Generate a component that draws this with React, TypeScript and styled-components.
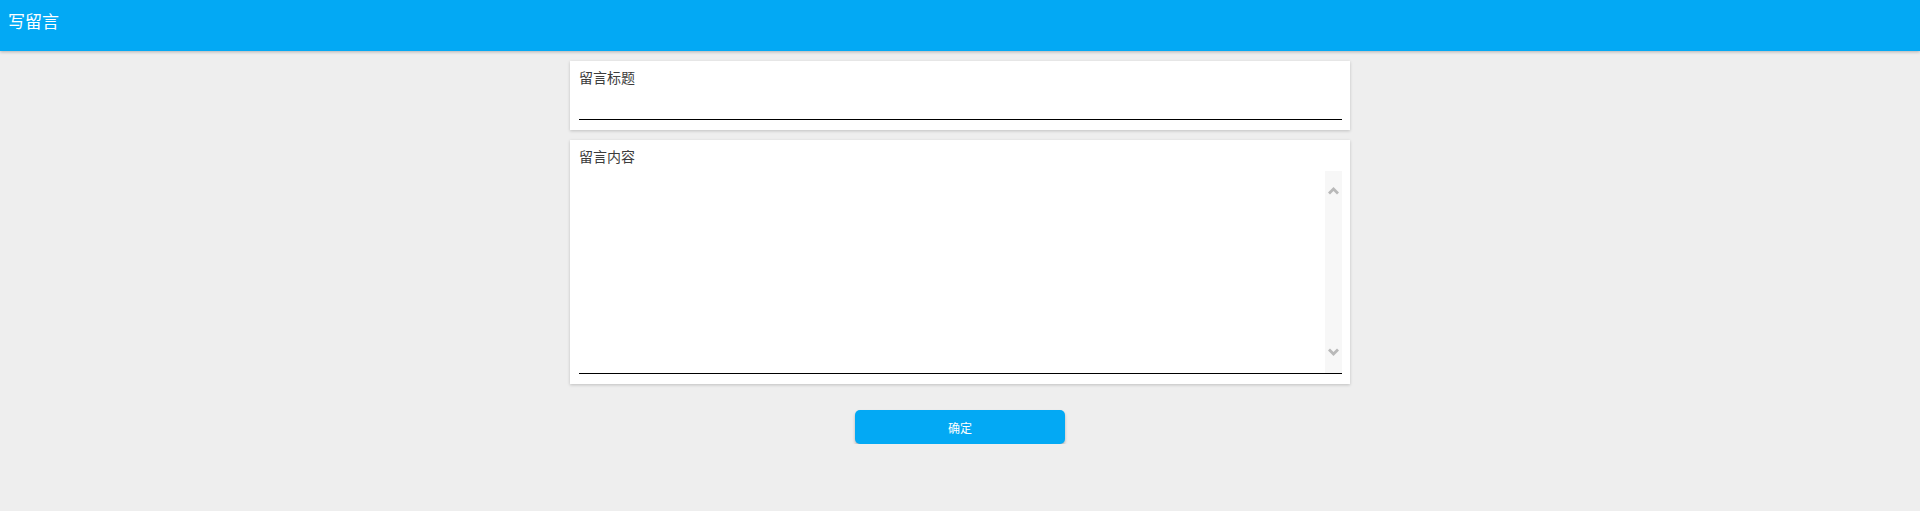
import React from 'react';
import styled, { createGlobalStyle } from 'styled-components';

const GlobalStyle = createGlobalStyle`
    html, body {
        margin: 0;
        padding: 0;
        background: #eeeeee;
        font-family: 'Noto Sans CJK SC', 'Noto Sans', sans-serif;
    }
`;

// Top app bar
const Header = styled.header`
    height: 51px;
    background: #03a9f4;
    box-shadow: 0 1px 3px rgba(0, 0, 0, 0.25);
    display: flex;
    align-items: center;
    padding: 0 8px;
    box-sizing: border-box;
`;

const HeaderTitle = styled.h1`
    margin: 0;
    color: #fff;
    font-size: 17px;
    font-weight: 400;
    line-height: 1;
    margin-top: -10px;
`;

const Main = styled.main`
    width: 780px;
    margin: 10px auto 0;
    display: flex;
    flex-direction: column;
    gap: 10px;
`;

// White field card
const Card = styled.section`
    background: #fff;
    box-shadow: 0 1px 3px rgba(0, 0, 0, 0.2);
    padding: 6px 8px 10px 9px;
    display: flex;
    flex-direction: column;
`;

const Label = styled.label`
    font-size: 14px;
    line-height: 20px;
    color: #3c3c3c;
`;

const TitleInput = styled.input`
    height: 33px;
    border: none;
    border-bottom: 1px solid #000;
    outline: none;
    padding: 0;
    font-size: 14px;
    font-family: inherit;
    box-sizing: border-box;
`;

const AreaRow = styled.div`
    margin-top: 5px;
    height: 203px;
    display: flex;
    border-bottom: 1px solid #000;
    box-sizing: border-box;
`;

const ContentArea = styled.textarea`
    flex: 1;
    border: none;
    outline: none;
    resize: none;
    padding: 0;
    font-size: 14px;
    font-family: inherit;
    overflow: hidden;
`;

// Scroll track drawn beside the textarea
const ScrollTrack = styled.div`
    width: 17px;
    background: #f7f7f7;
    display: flex;
    flex-direction: column;
    justify-content: space-between;
    align-items: center;
    padding: 16px 0 17px;
    box-sizing: border-box;
`;

const Chevron = ({ down }: { down?: boolean }) => (
    <svg width="11" height="8" viewBox="0 0 11 8">
        <polyline
            points={down ? '1,1.5 5.5,6 10,1.5' : '1,6.5 5.5,2 10,6.5'}
            fill="none"
            stroke="#b9b9b9"
            strokeWidth="2.8"
        />
    </svg>
);

const Actions = styled.div`
    display: flex;
    justify-content: center;
    padding-top: 16px;
`;

const SubmitButton = styled.button`
    width: 210px;
    height: 34px;
    border: none;
    border-radius: 5px;
    background: #03a9f4;
    color: #fff;
    font-family: inherit;
    font-size: 12px;
    box-shadow: 0 2px 3px rgba(0, 0, 0, 0.25);
    cursor: pointer;
`;

const App = () => {
    return (
        <>
            <GlobalStyle />
            <Header>
                <HeaderTitle>写留言</HeaderTitle>
            </Header>
            <Main>
                <Card>
                    <Label htmlFor="title">留言标题</Label>
                    <TitleInput id="title" type="text" />
                </Card>
                <Card>
                    <Label htmlFor="content">留言内容</Label>
                    <AreaRow>
                        <ContentArea id="content" />
                        <ScrollTrack>
                            <Chevron />
                            <Chevron down />
                        </ScrollTrack>
                    </AreaRow>
                </Card>
                <Actions>
                    <SubmitButton>确定</SubmitButton>
                </Actions>
            </Main>
        </>
    );
};

export default App;
